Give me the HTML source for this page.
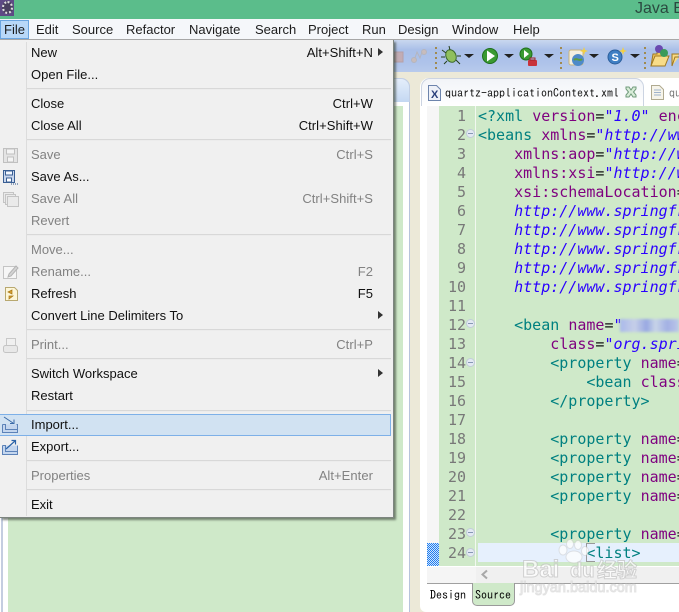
<!DOCTYPE html>
<html><head><meta charset="utf-8"><style>
*{box-sizing:border-box}
html,body{margin:0;padding:0;background:#fff}
#r{position:relative;width:679px;height:612px;overflow:hidden;font:13px "Liberation Sans","Noto Sans CJK SC",sans-serif;color:#111}
#r div,#r span.a,#r svg{position:absolute}
.mb{top:20px;line-height:19px;white-space:nowrap;color:#1c1c1c}
.i{left:31px;height:22px;line-height:22px;white-space:nowrap;margin-top:1px}
.s{right:20px;height:22px;line-height:22px;white-space:nowrap;text-align:right;margin-top:1px;letter-spacing:.05px}
.d{color:#828282}
.sp{left:27px;width:364px;height:2px;background:#d8d8d8;border-bottom:1px solid #ececec}
.n{left:438px;width:28px;text-align:right;font:15px/19px "DejaVu Sans Mono",monospace;color:#787878;margin-top:1px}
.c{left:478px;width:201px;overflow:hidden;white-space:pre;font:15px/19px "DejaVu Sans Mono",monospace;color:#008080;margin-top:1px}
.c i{color:#2a00ff}.c b{font-weight:normal;color:#7f007f}.c u{text-decoration:none;color:#111}
.f{left:466px;width:9px;height:9px;border-radius:50%;background:#e3e9f3;border:1px solid #c2cdda}
.f:after{content:"";position:absolute;left:1px;top:3px;width:5px;height:1px;background:#8797b5}
.ar{left:378px;width:0;height:0;border-left:5px solid #333;border-top:4px solid transparent;border-bottom:4px solid transparent}
.dd{width:0;height:0;border-top:4px solid #222;border-left:5px solid transparent;border-right:5px solid transparent;top:54px}
</style></head><body><div id="r">
<div style="left:0;top:0;width:679px;height:19px;background:#5bbd8b"></div>
<div style="left:0;top:0;width:14px;height:16px;background:#5e4a85"></div>
<div style="left:2px;top:1px;width:11px;height:13px;border-radius:50%;border:2px dotted #ddd;background:#4a4060"></div>
<div style="left:635px;top:0;line-height:18px;font-size:16px;color:#2b4a40;white-space:nowrap">Java El</div>

<div style="left:0;top:19px;width:679px;height:20px;background:#f5f7fa"></div>
<div style="left:0;top:39px;width:679px;height:1px;background:#a8a8a8"></div>
<div style="left:0;top:20px;width:29px;height:19px;background:#b8d8f8;border:1px solid #6aa5e0"></div>
<div class="mb" style="left:4px">File</div>
<div class="mb" style="left:36px">Edit</div>
<div class="mb" style="left:72px">Source</div>
<div class="mb" style="left:126px">Refactor</div>
<div class="mb" style="left:189px">Navigate</div>
<div class="mb" style="left:255px">Search</div>
<div class="mb" style="left:308px">Project</div>
<div class="mb" style="left:362px">Run</div>
<div class="mb" style="left:398px">Design</div>
<div class="mb" style="left:452px">Window</div>
<div class="mb" style="left:513px">Help</div>

<!-- toolbar -->
<div style="left:0;top:40px;width:679px;height:33px;background:linear-gradient(#c9d7ef 0,#a9bfe8 30%,#aec3ea 70%,#b9cbec 100%)"></div>
<div style="left:0;top:72px;width:679px;height:540px;background:#ece9d8"></div>
<svg style="left:394px;top:40px" width="285" height="32" viewBox="0 0 285 32">
<rect x="0" y="12" width="9" height="10" fill="#c8a8a8" stroke="#b89898" opacity=".8"/>
<g stroke="#b5b5bd" fill="#c8bcbc"><circle cx="20" cy="20" r="2.500"/><circle cx="30" cy="12" r="2.500"/><path d="M21 18l2-6 3 6 2-6" fill="none"/></g>
<g fill="#a08a50"><rect x="41" y="7" width="2" height="2"/><rect x="41" y="12" width="2" height="2"/><rect x="41" y="17" width="2" height="2"/><rect x="41" y="22" width="2" height="2"/><rect x="41" y="27" width="2" height="2"/>
<rect x="166" y="7" width="2" height="2"/><rect x="166" y="12" width="2" height="2"/><rect x="166" y="17" width="2" height="2"/><rect x="166" y="22" width="2" height="2"/><rect x="166" y="27" width="2" height="2"/>
<rect x="250" y="7" width="2" height="2"/><rect x="250" y="12" width="2" height="2"/><rect x="250" y="17" width="2" height="2"/><rect x="250" y="22" width="2" height="2"/><rect x="250" y="27" width="2" height="2"/></g>
<ellipse cx="57" cy="16" rx="5" ry="6.500" fill="#8fbf5e" stroke="#3c6a2c" transform="rotate(-25 57 16)"/>
<path d="M48 10l4 3M47 17h4M50 24l3-3M66 24l-4-4M67 16h-4M55 6l1 4" stroke="#26401c" fill="none"/>
<circle cx="96" cy="16" r="7.500" fill="#3a9a32" stroke="#1f6e1c"/><path d="M93 10.500l8 5.500-8 5.500z" fill="#fff"/>
<circle cx="132" cy="14" r="6" fill="#3a9a32" stroke="#1f6e1c"/><path d="M130 10l5 4-5 4z" fill="#fff"/>
<rect x="134" y="20" width="9" height="6" rx="1" fill="#c8323a"/><rect x="136" y="18" width="5" height="2" fill="none" stroke="#a02028"/>
<rect x="175" y="10" width="14" height="15" rx="2" fill="#f3efe0" stroke="#c8b47c"/><circle cx="184" cy="20" r="6" fill="#4e8ac8"/><path d="M180 20c3-3 5 2 8-1" stroke="#5c9c3c" stroke-width="2" fill="none"/>
<path d="M190 7l1 3 3 1-3 1-1 3-1-3-3-1 3-1z" fill="#f4d040"/>
<circle cx="221" cy="17" r="7" fill="#3f7fc4" stroke="#2c5f9c"/><text x="217.500" y="21" font-family="Liberation Sans" font-weight="bold" font-size="11" fill="#fff">S</text>
<path d="M229 7l1 3 3 1-3 1-1 3-1-3-3-1 3-1z" fill="#f4d040"/>
<path d="M257 26l2-12h4v-2h10" fill="#f0c860" stroke="#a07820"/>
<path d="M257 26l4-10h14l-4 10z" fill="#f8dc88" stroke="#a07820"/>
<circle cx="265" cy="9" r="4" fill="#6a4ab0"/><circle cx="270" cy="13" r="4" fill="#3a9a5a"/>
<path d="M278 26v-12h7M278 26l3-9h4" fill="#f8dc88" stroke="#a07820"/>
</svg>
<div class="dd" style="left:464px"></div><div class="dd" style="left:504px"></div><div class="dd" style="left:544px"></div><div class="dd" style="left:589px"></div><div class="dd" style="left:630px"></div>

<!-- left panel -->
<div style="left:0;top:78px;width:410px;height:534px;background:#fff;border-right:1px solid #b8c4dc;border-top-right-radius:9px"></div>
<div style="left:380px;top:78px;width:30px;height:24px;background:linear-gradient(#e4eefb,#c4d8f2);border:1px solid #c2cfe4;border-bottom:0;border-top-right-radius:9px"></div>
<div style="left:1px;top:100px;width:2px;height:512px;background:#c4cde0"></div>
<div style="left:8px;top:106px;width:395px;height:506px;background:#cfe9c9"></div>

<!-- editor -->
<div style="left:420px;top:78px;width:259px;height:534px;background:#fff;border-top-left-radius:9px;border-bottom-left-radius:6px"></div>
<div style="left:421px;top:78px;width:223px;height:28px;background:linear-gradient(#f2f4f8,#fff);border:1px solid #ccd4e2;border-bottom:0;border-radius:9px 9px 0 0"></div>
<svg style="left:428px;top:85px" width="13" height="16" viewBox="0 0 13 16"><path d="M.5.500h8l4 4v11H.5z" fill="#eef1f8" stroke="#6d84ac"/><text x="3" y="13" font-family="Liberation Sans" font-weight="bold" font-size="11" fill="#2a3f7a">X</text></svg>
<div style="left:445px;top:84px;font:12px/18px IPAGothic,'Liberation Mono',monospace;white-space:nowrap;color:#111;width:176px;overflow:hidden">quartz-applicationContext.xml</div>
<svg style="left:625px;top:86px" width="12" height="12" viewBox="0 0 12 12"><path d="M1 1h3l2 3 2-3h3v2L8.500 6 11 9v2H8L6 8l-2 3H1V9l2.500-3L1 3z" fill="#d8ecd8" stroke="#6f9a7a"/></svg>
<svg style="left:651px;top:85px" width="13" height="15" viewBox="0 0 13 15"><path d="M.5.500h8l4 4v10H.5z" fill="#f6f4ea" stroke="#b0aa90"/><path d="M3 5h7M3 7.500h7M3 10h7" stroke="#9fb2cc"/></svg>
<div style="left:669px;top:84px;font:12px/18px IPAGothic,'Liberation Mono',monospace;color:#777">qu</div>

<div style="left:427px;top:106px;width:12px;height:460px;background:#f6f6f6"></div>
<div style="left:439px;top:106px;width:240px;height:460px;background:#cfe9c9"></div>
<div style="left:475px;top:106px;width:1px;height:460px;background:#f2f8f0"></div>
<div style="left:478px;top:543px;width:201px;height:19px;background:#e6f0fd"></div>
<svg style="left:427px;top:543px" width="12" height="23" shape-rendering="crispEdges"><defs><pattern id="dp" width="2" height="2" patternUnits="userSpaceOnUse"><rect width="2" height="2" fill="#cfe4fb"/><rect width="1" height="1" fill="#1f7cf0"/><rect x="1" y="1" width="1" height="1" fill="#1f7cf0"/></pattern></defs><rect width="12" height="23" fill="url(#dp)"/></svg>

<div class="n" style="top:106px">1</div><div class="n" style="top:125px">2</div><div class="n" style="top:144px">3</div><div class="n" style="top:163px">4</div><div class="n" style="top:182px">5</div><div class="n" style="top:201px">6</div><div class="n" style="top:220px">7</div><div class="n" style="top:239px">8</div><div class="n" style="top:258px">9</div><div class="n" style="top:277px">10</div><div class="n" style="top:296px">11</div><div class="n" style="top:315px">12</div><div class="n" style="top:334px">13</div><div class="n" style="top:353px">14</div><div class="n" style="top:372px">15</div><div class="n" style="top:391px">16</div><div class="n" style="top:410px">17</div><div class="n" style="top:429px">18</div><div class="n" style="top:448px">19</div><div class="n" style="top:467px">20</div><div class="n" style="top:486px">21</div><div class="n" style="top:505px">22</div><div class="n" style="top:524px">23</div><div class="n" style="top:543px">24</div>
<div class="f" style="top:129px"></div><div class="f" style="top:319px"></div><div class="f" style="top:358px"></div><div class="f" style="top:528px"></div><div class="f" style="top:548px"></div>

<div class="c" style="top:106px">&lt;?xml <b>version</b><u>=</u><i>"1.0"</i> <b>encoding</b></div>
<div class="c" style="top:125px">&lt;beans <b>xmlns</b><u>=</u><i>"http://www.spring</i></div>
<div class="c" style="top:144px">    <b>xmlns:aop</b><u>=</u><i>"http://www.spring</i></div>
<div class="c" style="top:163px">    <b>xmlns:xsi</b><u>=</u><i>"http://www.w3</i></div>
<div class="c" style="top:182px">    <b>xsi:schemaLocation</b><u>=</u><i>"http</i></div>
<div class="c" style="top:201px"><i>    http://www.springframework</i></div>
<div class="c" style="top:220px"><i>    http://www.springframework</i></div>
<div class="c" style="top:239px"><i>    http://www.springframework</i></div>
<div class="c" style="top:258px"><i>    http://www.springframework</i></div>
<div class="c" style="top:277px"><i>    http://www.springframework</i></div>
<div class="c" style="top:315px">    &lt;bean <b>name</b><u>=</u><i>"</i></div>
<div style="left:620px;top:319px;width:59px;height:13px;background:linear-gradient(90deg,#a9b8ea,#c6cfe8 25%,#98a8e2 45%,#c8d4e8 60%,#a2b0e4 80%,#bcc8e8);filter:blur(1.200px)"></div>
<div class="c" style="top:334px">        <b>class</b><u>=</u><i>"org.springframework</i></div>
<div class="c" style="top:353px">        &lt;property <b>name</b><u>=</u><i>"x"</i></div>
<div class="c" style="top:372px">            &lt;bean <b>class</b><u>=</u></div>
<div class="c" style="top:391px">        &lt;/property&gt;</div>
<div class="c" style="top:429px">        &lt;property <b>name</b><u>=</u><i>"x"</i></div>
<div class="c" style="top:448px">        &lt;property <b>name</b><u>=</u><i>"x"</i></div>
<div class="c" style="top:467px">        &lt;property <b>name</b><u>=</u><i>"x"</i></div>
<div class="c" style="top:486px">        &lt;property <b>name</b><u>=</u><i>"x"</i></div>
<div class="c" style="top:524px">        &lt;property <b>name</b><u>=</u><i>"x"</i></div>
<div class="c" style="top:543px">            &lt;list&gt;</div>
<div style="left:586px;top:543px;width:9px;height:19px;border:1px solid #999;border-right:0"></div>

<div style="left:427px;top:566px;width:252px;height:17px;background:#f5f5f5;border-top:1px solid #fff"></div>
<div style="left:476px;top:566px;width:203px;height:17px;background:#f0f0f0;border-top:1px solid #fff"></div>
<svg style="left:480px;top:569px" width="9" height="11" viewBox="0 0 9 11"><path d="M7 1.500L2.500 5.500 7 9.500" fill="none" stroke="#a8a8a8" stroke-width="2"/></svg>
<div style="left:427px;top:583px;width:252px;height:1px;background:#a0a0a0"></div>
<div style="left:427px;top:584px;width:45px;height:22px;background:#fff"></div>
<div style="left:472px;top:583px;width:43px;height:23px;background:#cfe9c9;border:1px solid #9a9a9a;border-top:0;border-radius:0 0 5px 5px"></div>
<div style="left:430px;top:586px;font:12px/18px IPAGothic,'Liberation Mono',monospace;color:#000">Design</div>
<div style="left:475px;top:586px;font:12px/18px IPAGothic,'Liberation Mono',monospace;color:#000">Source</div>

<!-- watermark -->
<svg style="left:515px;top:535px" width="164" height="77" viewBox="0 0 164 77">
<g fill="#fff" opacity=".75" stroke="#c4c4c4" stroke-opacity=".6"><ellipse cx="48" cy="15" rx="4" ry="5"/><ellipse cx="55" cy="9" rx="3.500" ry="4.500"/><ellipse cx="63" cy="10" rx="3.500" ry="4.500"/><ellipse cx="70" cy="16" rx="3.500" ry="4.500"/><ellipse cx="59" cy="22" rx="8" ry="6"/></g>
<text x="7" y="42" font-family="Liberation Sans" font-weight="bold" font-size="24" fill="#fff" fill-opacity=".7" stroke="#b8b8b8" stroke-opacity=".6">Bai</text>
<text x="55" y="42" font-family="Liberation Sans" font-weight="bold" font-size="20" fill="#fff" fill-opacity=".7" stroke="#b8b8b8" stroke-opacity=".6">du</text>
<text x="82" y="42" font-family="'Noto Sans CJK SC',sans-serif" font-weight="bold" font-size="20" fill="#fff" fill-opacity=".7" stroke="#b8b8b8" stroke-opacity=".6">经验</text>
<text x="5" y="57" font-family="Liberation Sans" font-size="14.500" fill="#f4f4f4" fill-opacity=".8" stroke="#ccc" stroke-opacity=".5">jingyan.baidu.com</text>
</svg>

<!-- menu -->
<div style="left:0;top:40px;width:394px;height:478px;background:#f0f0f0;border-right:1px solid #7d8580;border-bottom:1px solid #7d8580;box-shadow:2px 2px 2px rgba(50,60,50,.6)"></div>
<div style="left:26px;top:42px;width:1px;height:474px;background:#dcdcdc"></div>

<div class="i" style="top:41px">New</div><div class="s" style="top:41px;left:0;width:373px">Alt+Shift+N</div><div class="ar" style="top:48px"></div>
<div class="i" style="top:63px">Open File...</div>
<div class="sp" style="top:88px"></div>
<div class="i" style="top:92px">Close</div><div class="s" style="top:92px;left:0;width:373px">Ctrl+W</div>
<div class="i" style="top:114px">Close All</div><div class="s" style="top:114px;left:0;width:373px">Ctrl+Shift+W</div>
<div class="sp" style="top:139px"></div>
<div class="i d" style="top:143px">Save</div><div class="s d" style="top:143px;left:0;width:373px">Ctrl+S</div>
<div class="i" style="top:165px">Save As...</div>
<div class="i d" style="top:187px">Save All</div><div class="s d" style="top:187px;left:0;width:373px">Ctrl+Shift+S</div>
<div class="i d" style="top:209px">Revert</div>
<div class="sp" style="top:234px"></div>
<div class="i d" style="top:238px">Move...</div>
<div class="i d" style="top:260px">Rename...</div><div class="s d" style="top:260px;left:0;width:373px">F2</div>
<div class="i" style="top:282px">Refresh</div><div class="s" style="top:282px;left:0;width:373px">F5</div>
<div class="i" style="top:304px">Convert Line Delimiters To</div><div class="ar" style="top:311px"></div>
<div class="sp" style="top:329px"></div>
<div class="i d" style="top:333px">Print...</div><div class="s d" style="top:333px;left:0;width:373px">Ctrl+P</div>
<div class="sp" style="top:358px"></div>
<div class="i" style="top:362px">Switch Workspace</div><div class="ar" style="top:369px"></div>
<div class="i" style="top:384px">Restart</div>
<div class="sp" style="top:410px"></div>
<div style="left:0;top:414px;width:391px;height:22px;background:#d1e2f2;border:1px solid #7db0e8;border-left:0"></div>
<div class="i" style="top:413px">Import...</div>
<div class="i" style="top:435px">Export...</div>
<div class="sp" style="top:460px"></div>
<div class="i d" style="top:464px">Properties</div><div class="s d" style="top:464px;left:0;width:373px">Alt+Enter</div>
<div class="sp" style="top:489px"></div>
<div class="i" style="top:493px">Exit</div>

<!-- menu icons -->
<svg style="left:0;top:140px" width="26" height="380" viewBox="0 0 26 380">
<g fill="#e4e4e4" stroke="#c0c0c0"><rect x="3.500" y="8.500" width="14" height="14"/><rect x="6.500" y="9" width="8" height="5" fill="#f4f4f4"/><rect x="7.500" y="17" width="6" height="5" fill="#f4f4f4"/></g>
<g fill="#c8d6ec" stroke="#3a5f94"><rect x="3.500" y="30.500" width="11" height="12"/><rect x="5.500" y="31" width="7" height="4" fill="#f4f8ff"/><rect x="6.500" y="38" width="5" height="4" fill="#fff"/></g>
<path d="M11 44h1M13 44h1M15 44h1M17 44h1" stroke="#2a4f84"/>
<g fill="#eaeaea" stroke="#c4c4c4"><rect x="3.500" y="52.500" width="10" height="10"/><rect x="5.500" y="54.500" width="10" height="10"/><rect x="7.500" y="56.500" width="11" height="10"/></g>
<path d="M3.500 126.500h13v12h-13z" fill="#f6f6f6" stroke="#c4c4c4"/><path d="M9 134l7-8 2 2-7 8-3 1z" fill="#d4d4d4" stroke="#b4b4b4"/>
<path d="M5.500 147.500h9l3 3v10h-12z" fill="#fdf6d8" stroke="#b8a870"/><path d="M8 152l4-2v4zM13 156l-4 3v-3z" fill="#d8a030" stroke="#a87818" stroke-width=".7"/>
<path d="M6.500 198.500h9v7h-9z" fill="#f0f0f0" stroke="#c8c8c8"/><rect x="3.500" y="205.500" width="14" height="7" rx="2" fill="#e8e8e8" stroke="#c4c4c4"/>
</svg>
<svg style="left:0;top:414px" width="26" height="46" viewBox="0 0 26 46">
<path d="M2.500 10.500h3v5h12v-5h-1M2.500 10.500v8h15v-8" fill="#c4d6ee" stroke="#5c82b8"/><path d="M4 3l9 6M10 9.500h4v-4" fill="none" stroke="#3a6aa8"/>
<path d="M2.500 31.500h3v6h12v-6M2.500 31.500v9h15v-9" fill="#c4d6ee" stroke="#5c82b8"/><path d="M6 35l9-8M11.500 26.500h4v4" fill="none" stroke="#2a62a8" stroke-width="1.200"/>
</svg>
</div></body></html>
